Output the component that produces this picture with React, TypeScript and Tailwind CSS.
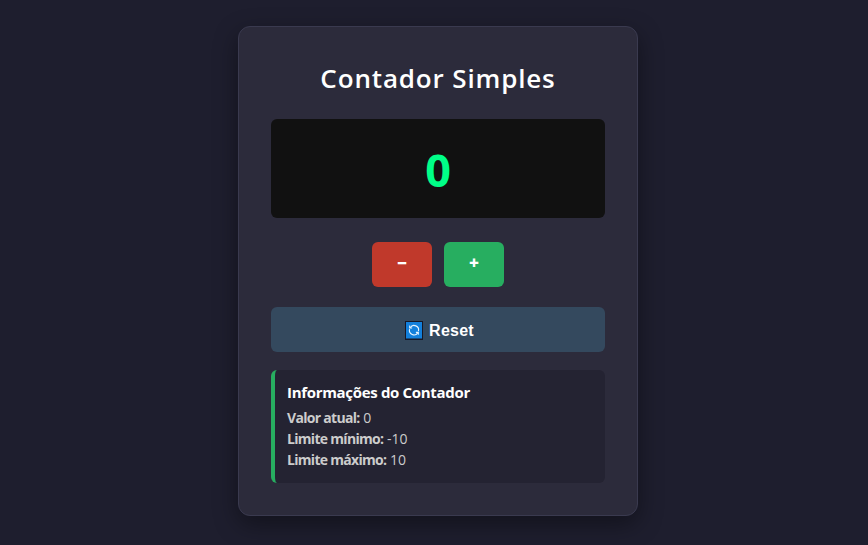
import { useState } from "react";

const MIN = -10;
const MAX = 10;

function ResetIcon() {
  return (
    <svg width="18" height="19" viewBox="0 0 18 19" fill="none" className="shrink-0">
      <rect width="18" height="19" fill="#171827" />
      <rect x="1" y="1" width="16" height="16.5" fill="#1380dc" />
      <g stroke="#e8f4ff" strokeWidth="1.1">
        <path d="M5.2 6.7A4.5 4.5 0 0 1 13.4 10.2" />
        <path d="M12.8 11.7A4.5 4.5 0 0 1 4.6 8.2" />
        <path d="M4.7 4.6v2.4h2.4M13.3 13.8v-2.4h-2.4" />
      </g>
    </svg>
  );
}

export default function App() {
  const [count, setCount] = useState(0);

  return (
    <div className="flex h-[545px] justify-center overflow-hidden bg-[#1e1e2e] pl-2 pt-[26px] font-['Open_Sans','Noto_Sans',sans-serif]">
      <main className="flex h-[490px] w-[400px] flex-col rounded-xl border border-[#3a3a4f] bg-[#2c2b3b] px-8 pt-8 shadow-[0_8px_24px_rgba(0,0,0,0.4)]">
        <h1 className="h-[60px] whitespace-nowrap text-center text-[26px] font-semibold leading-[39px] tracking-[0.85px] text-white">
          Contador Simples
        </h1>
        <div className="flex h-[99px] shrink-0 items-center justify-center rounded-md bg-[#111111] pt-[2px] text-[45px] font-bold leading-none text-[#00ff88]">
          {count}
        </div>
        <div className="mt-6 flex justify-center gap-3">
          <button
            className="h-[45px] w-[60px] rounded-md bg-[#c0392b] pb-[3px] text-[17px] font-extrabold text-white"
            onClick={() => setCount(Math.max(MIN, count - 1))}
          >
            −
          </button>
          <button
            className="h-[45px] w-[60px] rounded-md bg-[#27ae60] pb-[3px] text-[17px] font-extrabold text-white"
            onClick={() => setCount(Math.min(MAX, count + 1))}
          >
            +
          </button>
        </div>
        <button
          className="mt-5 flex h-[45px] shrink-0 items-center justify-center gap-[6px] rounded-md bg-[#34495e] pl-[3px] pt-0.5 font-['Liberation_Sans',sans-serif] text-base font-bold tracking-[0.25px] text-white"
          onClick={() => setCount(0)}
        >
          <ResetIcon />
          Reset
        </button>
        <section className="mt-[18px] h-[113px] shrink-0 rounded-md border-l-4 border-[#27ae60] bg-[#242332] pl-3 pt-3 text-sm leading-[21px] text-[#cccccc]">
          <h2 className="mb-1 text-[15px] font-bold leading-[21px] tracking-[-0.32px] text-white">Informações do Contador</h2>
          <p><strong className="tracking-[-0.7px]">Valor atual:</strong> {count}</p>
          <p><strong className="tracking-[-0.7px]">Limite mínimo:</strong> {MIN}</p>
          <p><strong className="tracking-[-0.7px]">Limite máximo:</strong> {MAX}</p>
        </section>
      </main>
    </div>
  );
}
